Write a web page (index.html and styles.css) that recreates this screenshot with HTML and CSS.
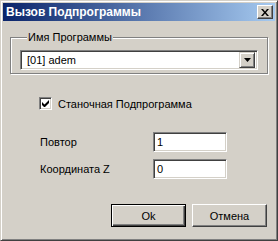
FILE: index.html
```html
<!DOCTYPE html>
<html>
<head>
<meta charset="utf-8">
<link rel="stylesheet" href="styles.css">
</head>
<body>
<div class="window">
  <div class="titlebar">
    <span class="title">Вызов Подпрограммы</span>
    <span class="close"><svg width="8" height="7" viewBox="0 0 8 7"><path d="M0 0h2l2 2.5L6 0h2L5 3.5 8 7H6L4 4.5 2 7H0l3-3.5z" fill="#000"/></svg></span>
  </div>
  <div class="body">
    <fieldset class="group">
      <legend class="legend">Имя Программы</legend>
      <div class="combo">
        <span class="combo-text">[01] adem</span>
        <span class="combo-btn"><svg width="7" height="4" viewBox="0 0 7 4"><path d="M0 0h7L3.5 4z" fill="#000"/></svg></span>
      </div>
    </fieldset>
    <div class="check-row">
      <span class="checkbox"><svg width="9" height="9" viewBox="0 0 9 9"><path d="M1 3v3l2 2h1l4-4V1L3.5 5.5z" fill="#000"/></svg></span>
      <span class="check-label">Станочная Подпрограмма</span>
    </div>
    <div class="field-row first">
      <span class="field-label">Повтор</span>
      <span class="edit">1</span>
    </div>
    <div class="field-row">
      <span class="field-label">Координата Z</span>
      <span class="edit">0</span>
    </div>
    <div class="buttons">
      <span class="btn default"><span class="btn-inner">Ok</span></span>
      <span class="btn"><span class="btn-inner">Отмена</span></span>
    </div>
  </div>
</div>
</body>
</html>
```
FILE: styles.css
```css
html, body {
  margin: 0;
  padding: 0;
  background: #d4d0c8;
}
body {
  font-family: "Liberation Sans", Arial, sans-serif;
  font-size: 11px;
  color: #000;
}
.window {
  width: 278px;
  height: 241px;
  box-sizing: border-box;
  border: 1px solid;
  border-color: #d4d0c8 #404040 #404040 #d4d0c8;
  box-shadow: inset 1px 1px 0 #fff, inset -1px -1px 0 #808080;
  padding: 2px;
  background: #d4d0c8;
  display: flex;
  flex-direction: column;
}
.titlebar {
  height: 18px;
  background: linear-gradient(to right, #0a246a, #a6caf0);
  display: flex;
  align-items: center;
  justify-content: space-between;
  padding: 0 2px 0 3px;
}
.title {
  color: #fff;
  font-weight: bold;
  font-size: 12px;
}
.close {
  width: 16px;
  height: 14px;
  box-sizing: border-box;
  background: #d4d0c8;
  border: 1px solid;
  border-color: #fff #404040 #404040 #fff;
  box-shadow: inset -1px -1px 0 #808080;
  display: flex;
  align-items: center;
  justify-content: center;
  padding-right: 1px;
}
.body {
  flex: 1;
  display: flex;
  flex-direction: column;
  padding: 10px 0 0 7px;
}
.group {
  margin: 0;
  width: 258px;
  height: 43px;
  box-sizing: border-box;
  border: 1px solid #808080;
  box-shadow: 1px 1px 0 #fff, inset 1px 1px 0 #fff;
  padding: 6px 9px 0 9px;
  min-width: 0;
}
.legend {
  padding: 0 1px;
  margin-left: 7px;
  background: #d4d0c8;
  line-height: 13px;
}
.combo {
  height: 20px;
  box-sizing: border-box;
  background: #fff;
  border: 1px solid;
  border-color: #808080 #fff #fff #808080;
  box-shadow: inset 1px 1px 0 #404040, inset -1px -1px 0 #d4d0c8;
  display: flex;
  align-items: center;
  padding: 2px;
}
.combo-text {
  flex: 1;
  padding-left: 4px;
}
.combo-btn {
  width: 16px;
  height: 16px;
  box-sizing: border-box;
  background: #d4d0c8;
  border: 1px solid;
  border-color: #d4d0c8 #404040 #404040 #d4d0c8;
  box-shadow: inset 1px 1px 0 #fff, inset -1px -1px 0 #808080;
  display: flex;
  align-items: center;
  justify-content: center;
}
.check-row {
  display: flex;
  align-items: center;
  margin: 23px 0 0 29px;
  height: 13px;
}
.checkbox {
  width: 13px;
  height: 13px;
  box-sizing: border-box;
  background: #fff;
  border: 1px solid;
  border-color: #808080 #fff #fff #808080;
  box-shadow: inset 1px 1px 0 #404040, inset -1px -1px 0 #d4d0c8;
  display: flex;
  align-items: center;
  justify-content: center;
  margin-right: 6px;
}
.field-row {
  display: flex;
  align-items: center;
  margin: 7px 0 0 30px;
}
.field-row.first {
  margin-top: 22px;
}
.field-label {
  width: 113px;
}
.edit {
  width: 74px;
  height: 20px;
  box-sizing: border-box;
  background: #fff;
  border: 1px solid;
  border-color: #808080 #fff #fff #808080;
  box-shadow: inset 1px 1px 0 #404040, inset -1px -1px 0 #d4d0c8;
  padding: 2px 3px;
  line-height: 14px;
}
.buttons {
  display: flex;
  justify-content: flex-end;
  gap: 6px;
  margin: 25px 8px 0 0;
}
.btn {
  width: 75px;
  height: 23px;
  box-sizing: border-box;
  border: 1px solid;
  border-color: #fff #404040 #404040 #fff;
  box-shadow: inset -1px -1px 0 #808080;
  display: flex;
}
.btn.default {
  border-color: #000;
  box-shadow: inset 1px 1px 0 #fff, inset -1px -1px 0 #404040, inset -2px -2px 0 #808080;
}
.btn-inner {
  flex: 1;
  display: flex;
  align-items: center;
  justify-content: center;
}
```
